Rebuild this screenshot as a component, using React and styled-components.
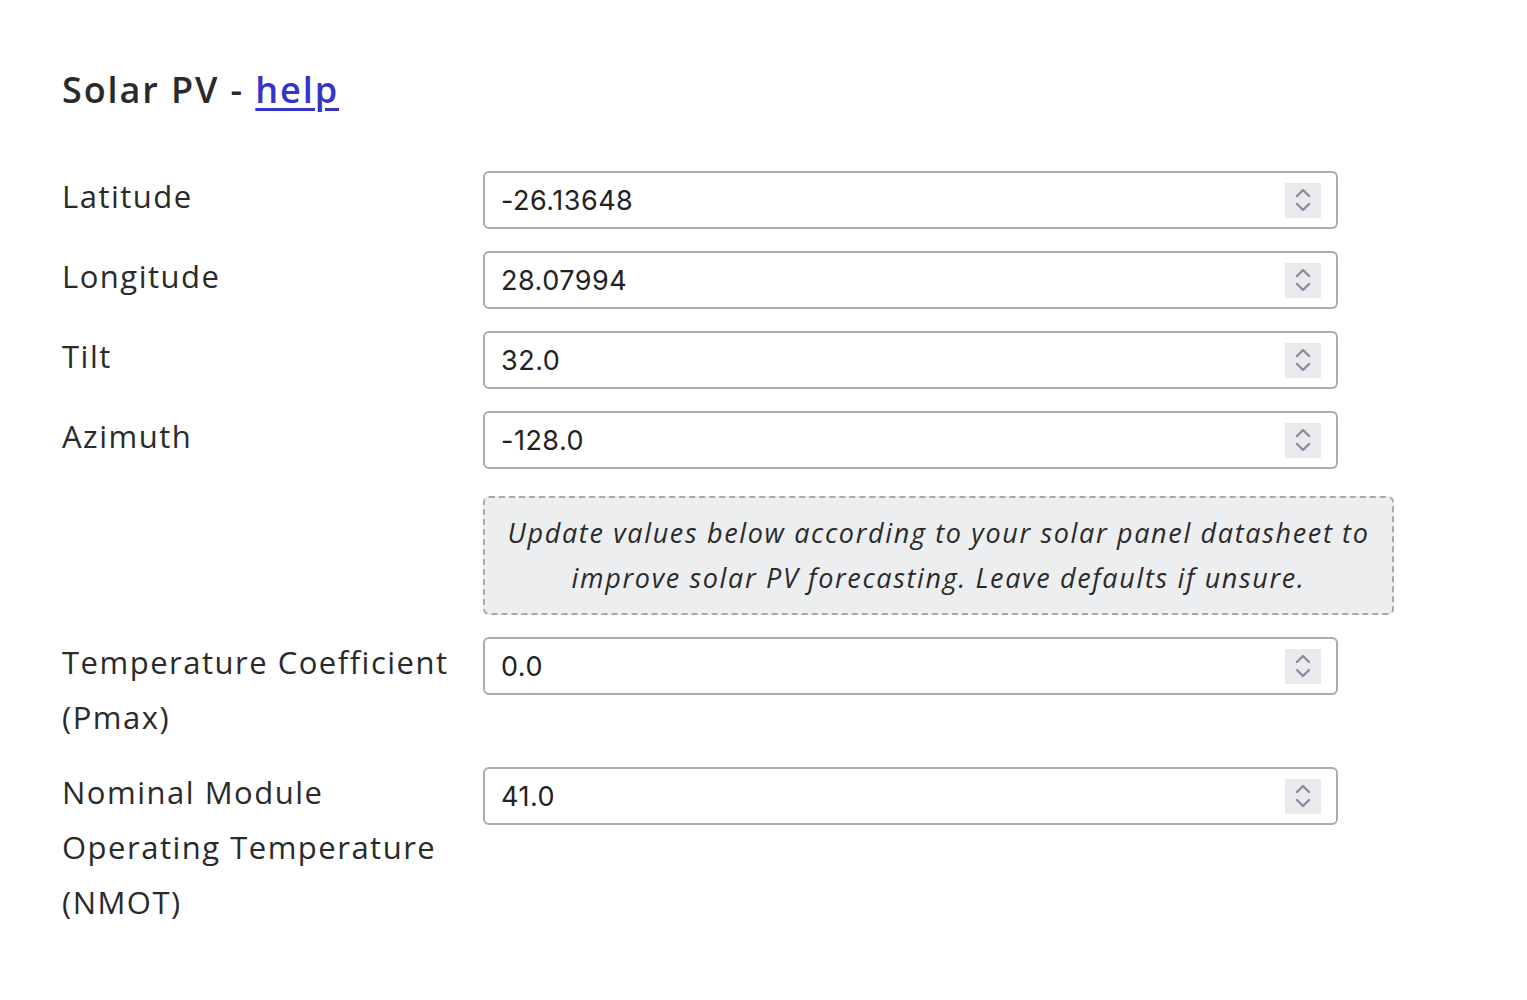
import React from "react";
import styled, { createGlobalStyle } from "styled-components";

const Global = createGlobalStyle`
	body {
		margin: 0;
		background: #ffffff;
		font-family: "Open Sans", "Noto Sans", sans-serif;
		color: #2a2a2a;
	}
`;

const Page = styled.div`
	padding: 66px 62px 40px 62px;
`;

const Title = styled.h2`
	margin: 0 0 57px 0;
	font-size: 36px;
	font-weight: 600;
	line-height: 48px;
	letter-spacing: 1.9px;
	color: #2a2a2a;
	a {
		color: #3434c8;
		text-decoration: underline;
		text-decoration-thickness: 3px;
		text-underline-offset: 5px;
	}
`;

const Form = styled.div`
	display: flex;
	flex-direction: column;
	gap: 22px;
`;

const Row = styled.div`
	display: grid;
	grid-template-columns: 421px 855px;
	align-items: start;
`;

const Label = styled.label`
	font-size: 31px;
	line-height: 55px;
	letter-spacing: 1.5px;
	color: #2a2a2a;
	margin-top: -2px;
	padding-right: 10px;
`;

const Field = styled.div`
	display: flex;
	align-items: center;
	height: 54px;
	border: 2px solid #ababab;
	border-radius: 6px;
	padding: 0 15px 0 16px;
	background: #fff;
`;

const Input = styled.input`
	flex: 1;
	border: none;
	outline: none;
	background: transparent;
	font-family: Inter, "Noto Sans", sans-serif;
	font-size: 27px;
	letter-spacing: 0.5px;
	color: #222;
	padding: 0;
	min-width: 0;
`;

const Spinner = styled.div`
	width: 36px;
	height: 35px;
	background: #e9e9ee;
	display: flex;
	align-items: center;
	justify-content: center;
`;

const Note = styled.div`
	grid-column: 2;
	width: 911px;
	box-sizing: border-box;
	margin-top: 5px;
	padding: 12px 10px 13px 10px;
	background: #edeef0;
	border: 2px dashed #a9a9a9;
	border-radius: 6px;
	text-align: center;
	font-style: italic;
	font-size: 27px;
	line-height: 45px;
	letter-spacing: 1.65px;
	color: #2a2a2a;
`;

const Chevrons = () => (
	<svg width="18" height="28" viewBox="0 0 18 28" fill="none" stroke="#8b8b9c" strokeWidth="2.4" strokeLinecap="round" strokeLinejoin="round">
		<path d="M3 10 L9 4 L15 10" />
		<path d="M3 18 L9 24 L15 18" />
	</svg>
);

const fields = [
	{ label: "Latitude", value: "-26.13648" },
	{ label: "Longitude", value: "28.07994" },
	{ label: "Tilt", value: "32.0" },
	{ label: "Azimuth", value: "-128.0" },
];

const extra = [
	{ label: "Temperature Coefficient (Pmax)", value: "0.0" },
	{ label: "Nominal Module Operating Temperature (NMOT)", value: "41.0" },
];

const NumberRow = ({ label, value }) => (
	<Row>
		<Label>{label}</Label>
		<Field>
			<Input type="text" defaultValue={value} />
			<Spinner>
				<Chevrons />
			</Spinner>
		</Field>
	</Row>
);

const App = () => {
	return (
		<>
			<Global />
			<Page>
				<Title>
					Solar PV - <a href="#help">help</a>
				</Title>
				<Form>
					{fields.map((f) => (
						<NumberRow key={f.label} {...f} />
					))}
					<Row>
						<Note>
							Update values below according to your solar panel datasheet to improve solar PV
							forecasting. Leave defaults if unsure.
						</Note>
					</Row>
					{extra.map((f) => (
						<NumberRow key={f.label} {...f} />
					))}
				</Form>
			</Page>
		</>
	);
};

export default App;
